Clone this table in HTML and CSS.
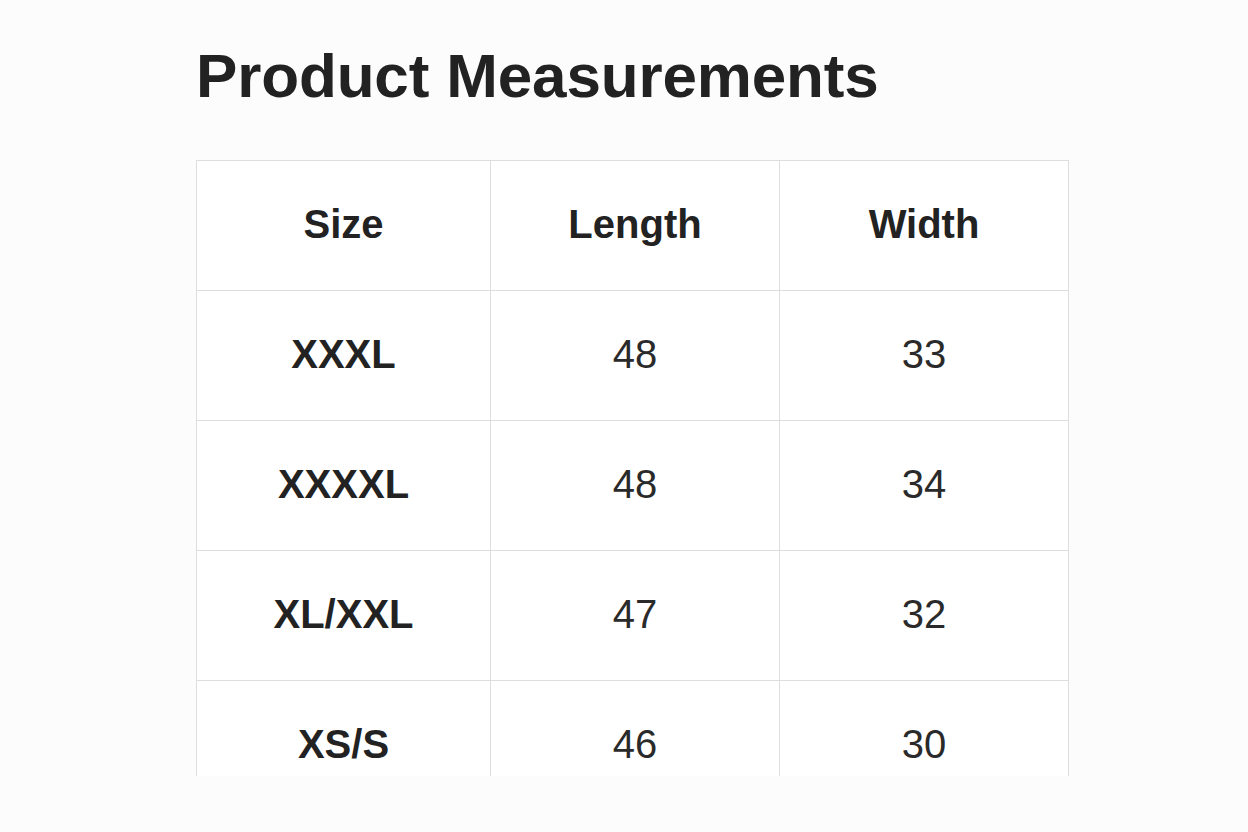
FILE: index.html
```html
<!DOCTYPE html>
<html lang="en">
<head>
<meta charset="utf-8">
<title>Product Measurements</title>
<link rel="stylesheet" href="styles.css">
</head>
<body>
<main class="page">
  <h1 class="title">Product Measurements</h1>
  <div class="table-clip">
    <table class="measure">
      <colgroup>
        <col class="c1">
        <col class="c2">
        <col class="c3">
      </colgroup>
      <thead>
        <tr><th>Size</th><th>Length</th><th>Width</th></tr>
      </thead>
      <tbody>
        <tr><th>XXXL</th><td>48</td><td>33</td></tr>
        <tr><th>XXXXL</th><td>48</td><td>34</td></tr>
        <tr><th>XL/XXL</th><td>47</td><td>32</td></tr>
        <tr><th>XS/S</th><td>46</td><td>30</td></tr>
      </tbody>
    </table>
  </div>
</main>
</body>
</html>
```

FILE: styles.css
```css
html, body {
  margin: 0;
  padding: 0;
  background: #fcfcfc;
}
body {
  font-family: "Liberation Sans", Arial, sans-serif;
  color: #222;
}
.page {
  padding: 45px 0 0 196px;
}
.title {
  margin: 0;
  font-size: 62px;
  line-height: 1;
  font-weight: 700;
  color: #222;
  letter-spacing: -0.15px;
}
.table-clip {
  margin-top: 53px;
  height: 616px;
  overflow: hidden;
  width: 880px;
}
.measure {
  border-collapse: collapse;
  table-layout: fixed;
  width: 873px;
  background: #fff;
}
.c1 { width: 294px; }
.c2 { width: 289px; }
.c3 { width: 289px; }
.measure th,
.measure td {
  border: 1px solid #dedede;
  height: 126px;
  padding: 0 0 3px;
  text-align: center;
  vertical-align: middle;
  font-size: 40px;
  color: #222;
}
.measure th { font-weight: 700; }
.measure td { font-weight: 400; color: #2a2a2a; }
```
